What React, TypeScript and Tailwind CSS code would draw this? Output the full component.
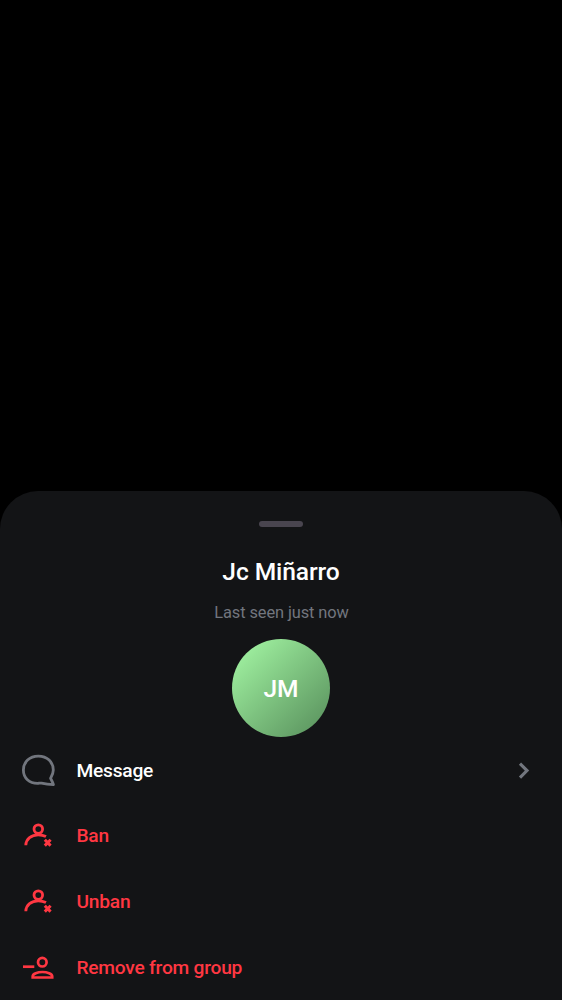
import type { ReactNode } from "react";

function MessageIcon() {
  return (
    <svg width="40" height="40" viewBox="0 0 40 40" fill="none" stroke="#72767e" strokeWidth="2.8" strokeLinejoin="round">
      <path d="M20.3 5.1C11.5 5.1 5.4 11.1 5.4 19C5.4 27.1 11.4 32.4 19.5 32.4C21 32.4 22 31.9 23.5 32.1C27 32.8 31.5 33.4 35.4 33.7C34.8 31.3 33.6 29.5 32.6 27.3C34 24.9 35.3 22.7 35.3 19.1C35.3 11.1 29.2 5.1 20.3 5.1Z" />
    </svg>
  );
}

function BanIcon() {
  return (
    <svg width="40" height="40" viewBox="0 0 40 40" fill="none" stroke="#ff3742" strokeWidth="2.8">
      <circle cx="20.3" cy="13.1" r="4.3" />
      <path d="M7.8 29.3C8 23 13.4 18.8 20.2 18.8C23 18.8 25.6 19.3 28 20.6" />
      <path d="M26.8 23.8L32.6 29.6M32.6 23.8L26.8 29.6" strokeWidth="3" />
    </svg>
  );
}

function RemoveIcon() {
  return (
    <svg width="40" height="40" viewBox="0 0 40 40" fill="none" stroke="#ff3742" strokeWidth="2.7">
      <circle cx="24.3" cy="14.2" r="4.3" />
      <path d="M5 18.7H16.3" />
      <path d="M14.7 29.5H34.2V28.2C34.2 25.7 29.2 24 24.4 24C19.6 24 14.7 25.7 14.7 28.2Z" />
    </svg>
  );
}

function Row({ icon, label, danger = true, chevron = false }: { icon: ReactNode; label: string; danger?: boolean; chevron?: boolean }) {
  return (
    <button className={`flex h-[65.6px] w-full shrink-0 items-center pr-[32px] pl-[18px] text-left ${danger ? "text-[#ff3742]" : "text-white"}`}>
      {icon}
      <span className="ml-[18.5px] flex-1 text-[19.2px] leading-6 font-medium tracking-[-0.24px]">{label}</span>
      {chevron && (
        <svg width="12" height="18" viewBox="0 0 12 18" fill="none" stroke="#72767e" strokeWidth="3.1">
          <path d="M2 1.6L9 8.6L2 15.6" />
        </svg>
      )}
    </button>
  );
}

export default function App() {
  return (
    <main className="flex h-[1000px] w-full flex-col overflow-hidden bg-black pt-[491px] font-[Roboto,sans-serif]">
      <section className="flex flex-1 flex-col items-center overflow-hidden rounded-t-[38px] bg-[#131416]">
        <div className="mt-[30px] h-[6px] w-[44px] shrink-0 rounded-full bg-[#49454f]" />
        <h1 className="mt-[29px] text-[24.6px] leading-8 font-medium tracking-[-0.1px] text-white">Jc Miñarro</h1>
        <p className="mt-[13px] pl-px text-[16.4px] leading-6 tracking-[-0.1px] text-[#72767e]">Last seen just now</p>
        <div className="mt-[14px] flex size-[98.4px] shrink-0 items-center justify-center rounded-full bg-linear-to-br from-[#a7fba7] to-[#568d5a] pt-[2px] text-[24.6px] font-medium text-white">
          JM
        </div>
        <nav className="flex w-full flex-col pt-[0.6px]">
          <Row icon={<MessageIcon />} label="Message" danger={false} chevron />
          <Row icon={<BanIcon />} label="Ban" />
          <Row icon={<BanIcon />} label="Unban" />
          <Row icon={<RemoveIcon />} label="Remove from group" />
        </nav>
      </section>
    </main>
  );
}
